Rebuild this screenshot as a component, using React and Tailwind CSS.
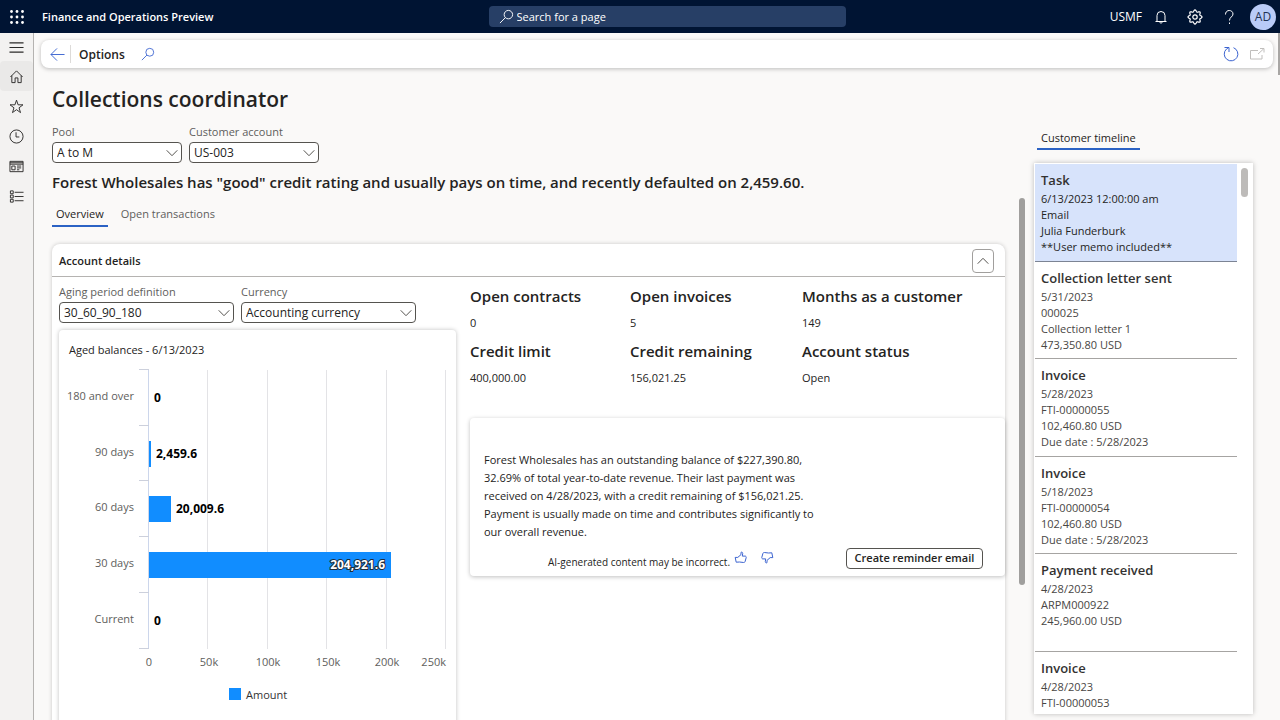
import React from "react";

function Svg({ className = "", children, box = "0 0 16 16" }) {
  return (
    <svg viewBox={box} className={className} fill="none" stroke="currentColor" strokeWidth="1" aria-hidden="true">
      {children}
    </svg>
  );
}

const SearchIcon = ({ className }) => (
  <Svg className={className}>
    <circle cx="10" cy="6" r="4.5" />
    <path d="M6.8 9.2 1 15" />
  </Svg>
);

const Chevron = ({ className, up }) => (
  <Svg className={className} box="0 0 12 8">
    <path d={up ? "M.7 6.7 6 1.3l5.3 5.4" : "M.7 1.3 6 6.7l5.3-5.4"} />
  </Svg>
);

const thumbUp = "M1.2 6.4h2.600L7 3.600V1.300c.9-.5 1.800.1 1.700 1.200L8.300 5.100h2.800c.9 0 1.300.8 1.100 1.500l-1 3.600c-.2.9-.8 1.400-1.600 1.300L5.500 11l-3.300.2z";

const gearPoints = Array.from({ length: 96 }, (_, i) => {
  const a = (i / 96) * Math.PI * 2;
  const r = 6.1 + 0.9 * Math.cos(8 * a);
  return `${(8 + r * Math.cos(a)).toFixed(2)},${(8 + r * Math.sin(a)).toFixed(2)}`;
}).join(" ");

const GearIcon = ({ className }) => (
  <Svg className={className}>
    <polygon points={gearPoints} strokeWidth="1.2" />
    <circle cx="8" cy="8" r="2.2" strokeWidth="1.2" />
  </Svg>
);

const navItems = [
  { label: "Expand navigation", height: "h-[28px]", icon: <path d="M.5 3h15M.5 8h15M.5 13h15" strokeWidth="1.3" /> },
  { label: "Home", height: "h-[30px]", active: true, icon: <path d="M1.500 8.500 8 2l6.500 6.500M3 7v7.500h3.500V9.500h3v5H13V7" /> },
  { label: "Favorites", height: "h-[30px]", icon: <path d="m8 1.200 1.700 5h5.200l-4.200 3.200 1.600 5.100L8 11.400l-4.300 3.100 1.600-5.100L1.100 6.200h5.200z" /> },
  { label: "Recent", height: "h-[30px]", icon: <><circle cx="8" cy="8" r="7" /><path d="M7.500 3.500v5H11" /></> },
  { label: "Workspaces", height: "h-[30px]", icon: <><path d="M1 2.500h14v11H1zM1 5.500h14M1 4h14" /><path d="M3 7.500h3.500v4H3zM8.500 7.500H13M8.500 9.500H13M8.500 11.500H11" /></> },
  { label: "Modules", height: "h-[30px]", icon: <path d="M1.500 2h3v3h-3zM1.500 6.500h3v3h-3zM1.500 11h3v3h-3zM6 3.500h9.500M6 8h9.500M6 12.500h9.500" /> },
];

function SelectField({ id, label, value, width }) {
  return (
    <div className={`flex flex-col gap-[2px] ${width}`}>
      <label htmlFor={id} className="text-[11px] leading-4 text-[#605e5c]">{label}</label>
      <div className="relative">
        <select id={id} className="block h-[21px] w-full appearance-none rounded border border-[#55534f] bg-white pl-1 pr-5 text-[12px] leading-4 text-[#242322]">
          <option>{value}</option>
        </select>
        <Chevron className="pointer-events-none absolute right-1 top-[7px] h-2 w-3 text-[#55534f]" />
      </div>
    </div>
  );
}

const stats = [
  ["Open contracts", "0"],
  ["Open invoices", "5"],
  ["Months as a customer", "149"],
  ["Credit limit", "400,000.00"],
  ["Credit remaining", "156,021.25"],
  ["Account status", "Open"],
];

const timeline = [
  { title: "Task", lines: ["6/13/2023 12:00:00 am", "Email", "Julia Funderburk", "**User memo included**"], selected: true },
  { title: "Collection letter sent", lines: ["5/31/2023", "000025", "Collection letter 1", "473,350.80 USD"] },
  { title: "Invoice", lines: ["5/28/2023", "FTI-00000055", "102,460.80 USD", "Due date : 5/28/2023"] },
  { title: "Invoice", lines: ["5/18/2023", "FTI-00000054", "102,460.80 USD", "Due date : 5/28/2023"] },
  { title: "Payment received", lines: ["4/28/2023", "ARPM000922", "245,960.00 USD"] },
  { title: "Invoice", lines: ["4/28/2023", "FTI-00000053"] },
];

const bars = [
  { label: "180 and over", text: "0", amount: 0 },
  { label: "90 days", text: "2,459.6", amount: 2459.6 },
  { label: "60 days", text: "20,009.6", amount: 20009.6 },
  { label: "30 days", text: "204,921.6", amount: 204921.6 },
  { label: "Current", text: "0", amount: 0 },
];
const ticks = ["0", "50k", "100k", "150k", "200k", "250k"];

function AgedBalancesChart() {
  const x0 = 90;
  const top = 10;
  const band = 55.7;
  const scale = 297.5 / 250000;
  return (
    <svg viewBox="0 0 397 400" className="block h-[400px] w-[397px]" role="img" aria-label="Aged balances">
      {ticks.slice(1).map((t, i) => (
        <path key={t} d={`M${Math.floor(x0 + (i + 1) * 59.5) - 0.5} ${top}v279`} stroke="#e3e3e6" />
      ))}
      <path d={`M${x0 - 0.5} ${top}v279`} stroke="#ccd6eb" />
      {[0, 1, 2, 3, 4, 5].map((i) => (
        <path key={i} d={`M${x0 - 10} ${Math.round(top + i * band) - 0.5}h10`} stroke="#ccd0dc" />
      ))}
      {bars.map((b, i) => {
        const mid = Math.round(top + (i + 0.5) * band);
        const w = Math.max(b.amount > 0 ? 2 : 0, Math.round(b.amount * scale) - 2);
        const inside = w > 200;
        return (
          <g key={b.label}>
            <text x="75" y={mid + 2} textAnchor="end" className="fill-[#605e5c] text-[11px]">{b.label}</text>
            {w > 0 && <rect x={x0} y={mid - 13} width={w} height="26" fill="#118dff" />}
            <text
              x={inside ? x0 + w - 6 : x0 + w + 5}
              y={mid + 4}
              textAnchor={inside ? "end" : "start"}
              className={inside ? "fill-white stroke-[#1f2c3a] stroke-2 text-[12px] font-bold [paint-order:stroke]" : "fill-black text-[12px] font-bold"}
            >
              {b.text}
            </text>
          </g>
        );
      })}
      {ticks.map((t, i) => (
        <text
          key={t}
          x={i === 5 ? 387 : Math.round(x0 + i * 59.5)}
          y="306"
          textAnchor={i === 5 ? "end" : "middle"}
          className="fill-[#605e5c] text-[11px]"
        >
          {t}
        </text>
      ))}
      <rect x="170" y="328" width="12" height="12" fill="#118dff" />
      <text x="187" y="339" className="fill-[#333333] text-[11px]">Amount</text>
    </svg>
  );
}

export default function App() {
  return (
    <div className="flex h-screen flex-col overflow-hidden bg-[#faf9f8] font-['Open_Sans','Noto_Sans',sans-serif] text-[#242322]">
      <header className="flex h-[33px] shrink-0 items-center bg-[#001433] text-white">
        <button aria-label="App launcher" className="flex w-[33px] justify-center">
          <svg viewBox="0 0 14 14" className="h-[14px] w-[14px]" fill="currentColor" aria-hidden="true">
            {[1.5, 7, 12.5].map((y) => [1.5, 7, 12.5].map((x) => <circle key={`${x}-${y}`} cx={x} cy={y} r="1.400" />))}
          </svg>
        </button>
        <div className="flex flex-1 pl-[9px] text-[11px] font-semibold leading-4">Finance and Operations Preview</div>
        <label className="ml-4 flex h-[21px] w-[357px] items-center gap-[3px] rounded bg-[#273f66] pl-[10px]">
          <SearchIcon className="h-[15px] w-[15px]" />
          <input aria-label="Search for a page" placeholder="Search for a page" className="min-w-0 flex-1 bg-transparent text-[11px] leading-4 outline-none placeholder:text-white" />
        </label>
        <div className="flex flex-1 items-center justify-end pr-1">
          <span className="text-[12px]">USMF</span>
          <button aria-label="Notifications" className="ml-[11px]">
            <Svg className="h-4 w-4"><path d="M2.500 12.500h11M4 12.500V6.500a4 4 0 0 1 8 0v6M6.500 12.500c0 2 3 2 3 0" /></Svg>
          </button>
          <button aria-label="Settings" className="ml-[18px]"><GearIcon className="h-4 w-4" /></button>
          <button aria-label="Help" className="ml-[18px]">
            <Svg className="h-4 w-4"><path d="M4.500 5.500c0-5.500 7.500-5 7.500-.5C12 8 8.500 7.800 8.500 11.500M8.500 13.500V15" /></Svg>
          </button>
          <button aria-label="Account" className="ml-[13px] flex h-[26px] w-[26px] items-center justify-center rounded-full bg-[#b9cbf7] text-[12px] text-[#1f3355]">AD</button>
        </div>
      </header>

      <div className="flex min-h-0 flex-1">
        <nav className="flex w-[34px] shrink-0 flex-col border-r border-[#b5b3b1] bg-[#f3f2f1]">
          {navItems.map((n) => (
            <button
              key={n.label}
              aria-label={n.label}
              className={`flex items-center justify-center rounded ${n.height} ${n.active ? "bg-[#eae9e8]" : ""}`}
            >
              <Svg className="h-[15px] w-[15px] text-[#2c2b2a]">{n.icon}</Svg>
            </button>
          ))}
        </nav>

        <main className="relative flex min-w-0 flex-1 flex-col pl-[7px] pt-[7px]">
          <div className="absolute right-0 top-0 h-[42px] w-[2px] bg-[#a8a6a4]" />
          <div className="mr-[7px] flex h-[28px] shrink-0 items-center rounded-lg bg-white pl-[9px] pr-2 shadow-[0_1px_4px_rgba(0,0,0,0.25)]">
            <button aria-label="Back" className="text-[#3b63d0]">
              <Svg className="h-[15px] w-[15px]"><path d="M15.500 8H1M7.500 1.500 1 8l6.500 6.500" /></Svg>
            </button>
            <div className="ml-[5px] h-[18px] w-px bg-[#dddbd9]" />
            <button className="ml-2 pt-[2px] text-[12px] font-semibold leading-4">Options</button>
            <button aria-label="Find" className="ml-4 text-[#3b63d0]"><SearchIcon className="h-[14px] w-[14px]" /></button>
            <div className="ml-auto flex items-center gap-[10px]">
              <button aria-label="Refresh" className="text-[#3b63d0]">
                <Svg className="h-4 w-4"><path d="M10.500 1.700A6.800 6.800 0 1 1 3.500 3L5.700 1.500M1.500 1.500h4.500v4.500" /></Svg>
              </button>
              <button aria-label="Open in new window" className="text-[#c0bebc]">
                <Svg className="h-4 w-4"><path d="M9 4.500H1.500v8.500H13V9M9 8l5.500-5M11 2.500h4v4" /></Svg>
              </button>
            </div>
          </div>

          <div className="flex min-h-0 flex-1 pl-[11px] pr-[27px]">
            <section className="flex min-w-0 flex-1 flex-col pt-[15px]">
              <h1 className="text-[21px] font-semibold leading-8">Collections coordinator</h1>
              <div className="mt-[9px] flex gap-[7px]">
                <SelectField id="pool" label="Pool" value="A to M" width="w-[130px]" />
                <SelectField id="account" label="Customer account" value="US-003" width="w-[130px]" />
              </div>
              <h2 className="mt-[7px] text-[15px] font-semibold leading-6">
                Forest Wholesales has "good" credit rating and usually pays on time, and recently defaulted on 2,459.60.
              </h2>

              <div className="mt-1 flex min-h-0 flex-1">
                <div className="flex min-w-0 flex-1 flex-col pt-2">
                  <div role="tablist" className="flex gap-[9px] text-[11px] leading-4">
                    <button role="tab" aria-selected="true" className="border-b-2 border-[#2b62c4] px-1 pb-[3px]">Overview</button>
                    <button role="tab" aria-selected="false" className="border-b-2 border-transparent px-1 pb-[3px] text-[#605e5c]">Open transactions</button>
                  </div>

                  <div className="mt-[17px] flex-1 rounded-t-lg bg-white shadow-[0_0_4px_rgba(0,0,0,0.2)]">
                    <div className="flex h-[33px] items-center justify-between border-b border-[#b5b3b1] pl-[7px] pr-[11px] pt-[2px]">
                      <h3 className="text-[11px] font-semibold leading-4">Account details</h3>
                      <button aria-label="Collapse account details" className="flex h-[24px] w-[22px] items-center justify-center rounded border border-[#a19f9d]">
                        <Chevron up className="h-2 w-3 text-[#55534f]" />
                      </button>
                    </div>

                    <div className="flex gap-[14px] pl-[7px]">
                      <div className="w-[397px] shrink-0 pt-[7px]">
                        <div className="flex gap-[7px]">
                          <SelectField id="aging" label="Aging period definition" value="30_60_90_180" width="w-[175px]" />
                          <SelectField id="currency" label="Currency" value="Accounting currency" width="w-[175px]" />
                        </div>
                        <div className="mt-[7px] rounded bg-white pt-3 shadow-[0_0_4px_rgba(0,0,0,0.25)]">
                          <h4 className="pl-[10px] text-[11px] leading-4">Aged balances - 6/13/2023</h4>
                          <div className="pt-[2px]"><AgedBalancesChart /></div>
                        </div>
                      </div>

                      <div className="min-w-0 flex-1 pt-2">
                        <dl className="grid grid-cols-[160px_172px_1fr] gap-y-[9px]">
                          {stats.map(([k, v]) => (
                            <div key={k} className="flex flex-col gap-2">
                              <dt className="text-[15px] font-semibold leading-[22px]">{k}</dt>
                              <dd className="text-[11px] leading-4">{v}</dd>
                            </div>
                          ))}
                        </dl>
                        <div className="mt-8 rounded bg-white pb-[7px] pt-[33px] shadow-[0_1px_4px_rgba(0,0,0,0.25)]">
                          <p className="pl-[14px] text-[11px] leading-[18px]">
                            Forest Wholesales has an outstanding balance of $227,390.80,<br />
                            32.69% of total year-to-date revenue. Their last payment was<br />
                            received on 4/28/2023, with a credit remaining of $156,021.25.<br />
                            Payment is usually made on time and contributes significantly to<br />
                            our overall revenue.
                          </p>
                          <div className="mt-[7px] flex h-[21px] items-center pl-[78px] pr-[22px]">
                            <span className="pt-[6px] text-[10px] leading-4">AI-generated content may be incorrect.</span>
                            <button aria-label="Like" className="ml-1 pb-[3px] text-[#3b63d0]">
                              <Svg className="h-[13px] w-[13px]" box="0 0 13 13"><path d={thumbUp} /></Svg>
                            </button>
                            <button aria-label="Dislike" className="ml-[14px] pb-[3px] text-[#3b63d0]">
                              <Svg className="h-[13px] w-[13px] rotate-180" box="0 0 13 13"><path d={thumbUp} /></Svg>
                            </button>
                            <button className="ml-auto flex h-[21px] w-[137px] items-center justify-center rounded border border-[#55534f] bg-white text-[11px] font-semibold">Create reminder email</button>
                          </div>
                        </div>
                      </div>
                    </div>
                  </div>
                </div>
                <div className="ml-[14px] h-[387px] w-[6px] rounded-full bg-[#a09f9d]" />
              </div>
            </section>

            <aside className="ml-[9px] flex w-[219px] shrink-0 flex-col pb-[6px] pt-[62px]">
              <div role="tablist" className="flex pl-[3px]">
                <button role="tab" aria-selected="true" className="border-b-2 border-[#2b62c4] px-1 pb-[2px] text-[11px] leading-4">Customer timeline</button>
              </div>
              <div className="mt-[13px] flex min-h-0 flex-1 overflow-hidden bg-white pl-px pt-px shadow-[0_0_5px_rgba(0,0,0,0.25)]">
                <ol className="grid h-[585px] flex-1 grid-rows-6">
                  {timeline.map((e, i) => (
                    <li
                      key={i}
                      className={`border-b pl-[6px] pt-[6px] ${e.selected ? "border-[#7c8494] bg-[#d7e3fb] text-[#242322]" : "border-[#a6a4a2] text-[#484644]"}`}
                    >
                      <h5 className="text-[13px] font-semibold leading-[21px] text-[#333231]">{e.title}</h5>
                      {e.lines.map((l) => (
                        <p key={l} className="text-[11px] leading-4">{l}</p>
                      ))}
                    </li>
                  ))}
                </ol>
                <div className="ml-1 mr-[5px] mt-1 h-[29px] w-[7px] rounded-full bg-[#bdbbb9]" />
              </div>
            </aside>
          </div>
        </main>
      </div>
    </div>
  );
}
